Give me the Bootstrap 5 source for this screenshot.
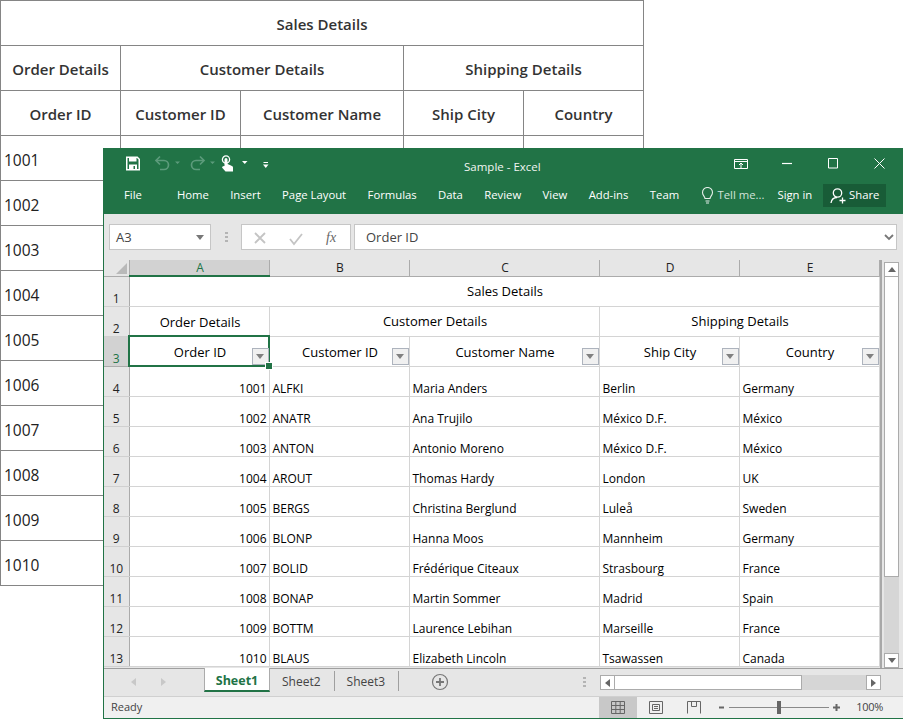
<!DOCTYPE html>
<html lang="en">
<head>
  <meta charset="UTF-8" />
  <title>Sales Details - Excel</title>
  <link href="https://cdn.jsdelivr.net/npm/bootstrap@5.3.0/dist/css/bootstrap.min.css" rel="stylesheet">
  <style>
    body { margin: 0; background: #fff; width: 903px; height: 719px; overflow: hidden; position: relative; font-family: "Open Sans", "Noto Sans", sans-serif; }

    /* table behind the window */
    .back-sheet { width: 644px; border-collapse: collapse; table-layout: fixed; margin: 0; color: #212121; }
    .back-sheet td, .back-sheet th { border: 1px solid #858585; height: 45px; padding: 2px 3px 0; font-size: 15px; vertical-align: middle; }
    .back-sheet th { text-align: center; font-weight: 600; color: #333; }
    .back-sheet td { font-size: 15.5px; padding-top: 5px; }

    /* excel window */
    .xl-window { position: absolute; left: 103px; top: 148px; width: 800px; height: 571px; border: 1px solid #217346; border-top: 0; border-right: 0; background: #e6e6e6; overflow: hidden; }
    .xl-title { height: 33px; background: #217346; color: #fff; position: relative; padding-left: 21px; }
    .xl-title-text { position: absolute; left: 360px; top: 10px; font-size: 11.5px; color: #f1f6f3; }
    .xl-tabs { height: 33px; background: #217346; color: #fff; font-size: 11.3px; padding-left: 20px; padding-bottom: 5px; }
    .xl-tabs span.tab { margin-right: 21.4px; }
    .xl-share { width: 63px; height: 23px; background: #185c37; margin-left: 11px; gap: 3px; }
    .xl-dim { color: #d3e3da; }

    .xl-formula { height: 46px; padding: 10px 6px 10px 5px; }
    .xl-box { background: #fff; border: 1px solid #c6c6c6; height: 26px; font-size: 13px; color: #444; padding-top: 1px; }
    .xl-name { width: 102px; padding-left: 6px; padding-right: 6px; }
    .xl-grip { width: 30px; }
    .xl-fx { width: 110px; }
    .xl-fx-label { font-family: "Liberation Serif", serif; font-style: italic; font-size: 14px; color: #666; margin-left: 4px; }
    .xl-input { flex: 1; margin-left: 3px; padding-left: 11px; padding-right: 11px; }

    .xl-body { height: 408px; position: relative; }
    .xl-grid-wrap { width: 776px; height: 408px; overflow: hidden; }
    .xl-grid { border-collapse: collapse; table-layout: fixed; width: 775px; margin: 0; font-size: 12px; color: #000; background: #fff; }
    .xl-grid td { border: 1px solid #d4d4d4; padding: 0 2px 0 3px; height: 30px; vertical-align: bottom; line-height: 15px; white-space: nowrap; overflow: hidden; position: relative; }
    .xl-grid th { background: #e6e6e6; font-weight: 400; text-align: center; height: 16px; padding: 0 0 0 2px; border: 0; border-right: 1px solid #ababab; border-bottom: 1px solid #ababab; color: #222; font-size: 12px; line-height: 15px; }
    .xl-grid th.is-on { background: #d2d2d2; color: #217346; border-bottom: 2px solid #217346; }
    .xl-grid th.rh { vertical-align: bottom; height: 30px; font-size: 12px; padding-left: 0; border-bottom-color: #d0d0d0; }
    .xl-grid th.rh.is-on { background: #d2d2d2; border-bottom: 1px solid #ababab; }
    .xl-grid td.num { text-align: right; }
    .xl-grid td.hd { text-align: center; vertical-align: middle; font-size: 13px; padding-left: 4px; }
    .xl-grid td.hd-low { padding-top: 2px; }
    .xl-grid td.hd3 { padding-top: 3px; overflow: visible; }
    .xl-grid td.sel { outline: 2px solid #217346; outline-offset: -1px; overflow: visible; z-index: 2; }
    .xl-corner { width: 0; height: 0; border-left: 11px solid transparent; border-bottom: 11px solid #b9b9b9; margin: 2px 2px 0 auto; }
    .xl-filter { position: absolute; right: 0; bottom: 1px; width: 17px; height: 17px; background: #f0f0f0; border: 1px solid #adb3bd; }
    .xl-filter::after { content: ""; position: absolute; left: 3px; top: 5px; border: 4px solid transparent; border-top: 5px solid #808080; border-bottom: 0; }
    .xl-handle { position: absolute; right: -4px; bottom: -4px; width: 6px; height: 6px; background: #217346; border: 1px solid #fff; box-sizing: content-box; z-index: 3; }

    .xl-vscroll { width: 23px; height: 408px; padding: 2px 4px 0 2px; border-left: 2px solid #a8a8a8; background: #e6e6e6; }
    .xl-sb-btn { height: 15px; background: #fff; border: 1px solid #ababab; flex-shrink: 0; }
    .xl-sb-thumb { height: 300px; background: #fff; border: 1px solid #ababab; border-top: 0; }
    .xl-sb-track { flex: 1; background: #d6d6d6; }
    .tri-up { border: 4px solid transparent; border-bottom: 5px solid #666; border-top: 0; }
    .tri-down { border: 4px solid transparent; border-top: 5px solid #666; border-bottom: 0; }
    .tri-left { border: 4px solid transparent; border-right: 5px solid #666; border-left: 0; }
    .tri-right { border: 4px solid transparent; border-left: 5px solid #666; border-right: 0; }

    .xl-sheets { height: 28px; border-top: 1px solid #9f9f9f; background: #e6e6e6; position: relative; font-size: 12px; color: #444; }
    .xl-nav { width: 100px; gap: 25px; padding-right: 12px; padding-top: 2px; }
    .xl-sheet-on { width: 66px; height: 24px; background: #fff; color: #217346; font-weight: 700; text-align: center; border: 1px solid #ababab; border-top: 0; border-bottom: 2px solid #217346; line-height: 25px; font-size: 12.5px; margin-top: -1px; }
    .xl-sheet { padding: 0 13px 0 12px; height: 20px; line-height: 21px; border-right: 1px solid #9f9f9f; margin-top: 2px; }
    .xl-add { margin-left: 32px; }
    .xl-dots { margin-left: 127px; width: 16px; }
    .xl-hscroll { width: 281px; height: 15px; margin-top: 6px; margin-right: 22px; background: #d6d6d6; }
    .xl-hs-btn { width: 15px; height: 15px; background: #fff; border: 1px solid #ababab; }
    .xl-hs-thumb { width: 187px; height: 15px; background: #fff; border: 1px solid #ababab; border-left: 0; }

    .xl-status { height: 22px; background: #f0f0f0; border-top: 1px solid #d0d0d0; font-size: 11px; color: #444; padding-left: 7px; }
    .xl-view { width: 38px; height: 21px; }
    .xl-view.is-on { background: #c8c8c8; }
    .xl-zoom-line { width: 100px; height: 1px; background: #8a8a8a; position: relative; }
    .xl-zoom-knob { position: absolute; left: 48px; top: -6px; width: 4px; height: 13px; background: #666; }
    .xl-zoom-pct { margin-left: 16px; letter-spacing: -.3px; }
  </style>
</head>
<body>
  <table class="back-sheet">
    <colgroup><col style="width:120px"><col style="width:120px"><col style="width:163px"><col style="width:120px"><col style="width:120px"></colgroup>
    <tr><th colspan="5">Sales Details</th></tr>
    <tr><th>Order Details</th><th colspan="2">Customer Details</th><th colspan="2">Shipping Details</th></tr>
    <tr><th>Order ID</th><th>Customer ID</th><th>Customer Name</th><th>Ship City</th><th>Country</th></tr>
    <tr><td>1001</td><td></td><td></td><td></td><td></td></tr>
    <tr><td>1002</td><td></td><td></td><td></td><td></td></tr>
    <tr><td>1003</td><td></td><td></td><td></td><td></td></tr>
    <tr><td>1004</td><td></td><td></td><td></td><td></td></tr>
    <tr><td>1005</td><td></td><td></td><td></td><td></td></tr>
    <tr><td>1006</td><td></td><td></td><td></td><td></td></tr>
    <tr><td>1007</td><td></td><td></td><td></td><td></td></tr>
    <tr><td>1008</td><td></td><td></td><td></td><td></td></tr>
    <tr><td>1009</td><td></td><td></td><td></td><td></td></tr>
    <tr><td>1010</td><td></td><td></td><td></td><td></td></tr>
  </table>

  <div class="xl-window d-flex flex-column">
    <div class="xl-title d-flex align-items-center">
      <svg width="150" height="20" viewBox="0 0 150 20" fill="none">
        <!-- save -->
        <path d="M1.750 2.250h10.500l2 2v10.500h-12.500z" stroke="#fff" stroke-width="1.500"/>
        <path d="M4 2h7.500v4.500h-7.500zM4 9.500h8v5h-8z" fill="#fff"/>
        <path d="M8.500 11h1.500v3h-1.500z" fill="#217346"/>
        <!-- undo, redo -->
        <g stroke="#5c9b7b" stroke-width="1.700">
          <path d="M31 5.500h8a4.500 4.500 0 0 1 0 9h-4"/><path d="M35 1.500l-4 4 4 4"/>
          <path d="M79 5.500h-8a4.500 4.500 0 0 0 0 9h4"/><path d="M75 1.500l4 4-4 4"/>
        </g>
        <path d="M50 6.500h5l-2.500 2.500zM85 6.500h5l-2.500 2.500z" fill="#5c9b7b"/>
        <!-- touch mode -->
        <circle cx="101" cy="4.500" r="3.600" stroke="#fff" stroke-width="1.300"/>
        <path d="M99.500 11V4.500a1.500 1.500 0 0 1 3 0v4.500l3.500 1.500c1 .5 2 1 2 2v4h-7.500l-3.500-4 .8-1.200z" fill="#fff"/>
        <path d="M117 6h5.500l-2.750 3z" fill="#fff"/>
        <!-- customize -->
        <path d="M138.500 7.500h4.500" stroke="#fff"/>
        <path d="M138 9.500h5.500l-2.750 3.500z" fill="#fff"/>
      </svg>
      <div class="xl-title-text">Sample - Excel</div>
      <div class="ms-auto d-flex align-items-center" style="padding-right:9px">
        <svg width="160" height="20" viewBox="0 0 160 20" fill="none" stroke="#fff" stroke-width="1">
          <path d="M.500 4.500h13v9h-13zM.500 6.500h13M7 13v-5M5 10l2-2 2 2"/>
          <path d="M48 8.500h10" stroke-width="1.200"/>
          <path d="M94.500 3.500h9v9.500h-9z"/>
          <path d="M140.500 3.500l10 10M150.500 3.500l-10 10"/>
        </svg>
      </div>
    </div>
    <div class="xl-tabs d-flex align-items-center">
      <span class="tab" style="margin-right:35px">File</span>
      <span class="tab">Home</span>
      <span class="tab">Insert</span>
      <span class="tab">Page Layout</span>
      <span class="tab">Formulas</span>
      <span class="tab">Data</span>
      <span class="tab">Review</span>
      <span class="tab">View</span>
      <span class="tab">Add-ins</span>
      <span class="tab">Team</span>
      <svg width="13" height="17" viewBox="0 0 13 17" fill="none" stroke="#e4eee9" stroke-width="1.100"><path d="M4 11.500c0-2-2.500-3-2.500-6a5 5 0 0 1 10 0c0 3-2.500 4-2.500 6zM4.500 14h4M5 16h3"/></svg>
      <span class="xl-dim ms-1" style="margin-right:13px">Tell me...</span>
      <span>Sign in</span>
      <div class="xl-share d-flex align-items-center justify-content-center">
        <svg width="16" height="17" viewBox="0 0 16 17" fill="none" stroke="#fff" stroke-width="1.300"><circle cx="7.500" cy="6" r="4.200"/><path d="M1 16c.5-3.500 3-5.500 6-5.500M9.500 13.500h6M12.500 10.500v6"/></svg>
        <span>Share</span>
      </div>
    </div>

    <div class="xl-formula d-flex">
      <div class="xl-box xl-name d-flex align-items-center justify-content-between"><span>A3</span><span class="tri-down" style="border-top-color:#777"></span></div>
      <div class="xl-grip d-flex align-items-center justify-content-center">
        <svg width="3" height="11" viewBox="0 0 3 11" fill="#b4b4b4"><path d="M0 0h3v2h-3zM0 4h3v2h-3zM0 8h3v2h-3z"/></svg>
      </div>
      <div class="xl-box xl-fx d-flex align-items-center">
        <svg width="80" height="24" viewBox="0 0 80 24" fill="none" stroke="#c4c4c4" stroke-width="1.800">
          <path d="M13 7l10 10M23 7l-10 10"/>
          <path d="M48 13l4 5 8-10"/>
        </svg>
        <span class="xl-fx-label">fx</span>
      </div>
      <div class="xl-box xl-input d-flex align-items-center justify-content-between"><span>Order ID</span><svg width="10" height="7" viewBox="0 0 10 7" fill="none" stroke="#777" stroke-width="1.800" style="margin-right:-9px"><path d="M1 1l4 4 4-4"/></svg></div>
    </div>

    <div class="xl-body d-flex">
      <div class="xl-grid-wrap">
        <table class="xl-grid">
          <colgroup><col style="width:25px"><col style="width:140px"><col style="width:140px"><col style="width:190px"><col style="width:140px"><col style="width:140px"></colgroup>
          <tr><th><div class="xl-corner"></div></th><th class="is-on">A</th><th>B</th><th>C</th><th>D</th><th>E</th></tr>
          <tr><th class="rh">1</th><td class="hd" colspan="5">Sales Details</td></tr>
          <tr><th class="rh">2</th><td class="hd hd-low">Order Details</td><td class="hd" colspan="2">Customer Details</td><td class="hd" colspan="2">Shipping Details</td></tr>
          <tr><th class="rh is-on">3</th><td class="hd hd3 sel">Order ID<span class="xl-filter"></span><span class="xl-handle"></span></td><td class="hd hd3">Customer ID<span class="xl-filter"></span></td><td class="hd hd3">Customer Name<span class="xl-filter"></span></td><td class="hd hd3">Ship City<span class="xl-filter"></span></td><td class="hd hd3">Country<span class="xl-filter"></span></td></tr>
          <tr><th class="rh">4</th><td class="num">1001</td><td>ALFKI</td><td>Maria Anders</td><td>Berlin</td><td>Germany</td></tr>
          <tr><th class="rh">5</th><td class="num">1002</td><td>ANATR</td><td>Ana Trujilo</td><td>México D.F.</td><td>México</td></tr>
          <tr><th class="rh">6</th><td class="num">1003</td><td>ANTON</td><td>Antonio Moreno</td><td>México D.F.</td><td>México</td></tr>
          <tr><th class="rh">7</th><td class="num">1004</td><td>AROUT</td><td>Thomas Hardy</td><td>London</td><td>UK</td></tr>
          <tr><th class="rh">8</th><td class="num">1005</td><td>BERGS</td><td>Christina Berglund</td><td>Luleå</td><td>Sweden</td></tr>
          <tr><th class="rh">9</th><td class="num">1006</td><td>BLONP</td><td>Hanna Moos</td><td>Mannheim</td><td>Germany</td></tr>
          <tr><th class="rh">10</th><td class="num">1007</td><td>BOLID</td><td>Frédérique Citeaux</td><td>Strasbourg</td><td>France</td></tr>
          <tr><th class="rh">11</th><td class="num">1008</td><td>BONAP</td><td>Martin Sommer</td><td>Madrid</td><td>Spain</td></tr>
          <tr><th class="rh">12</th><td class="num">1009</td><td>BOTTM</td><td>Laurence Lebihan</td><td>Marseille</td><td>France</td></tr>
          <tr><th class="rh">13</th><td class="num">1010</td><td>BLAUS</td><td>Elizabeth Lincoln</td><td>Tsawassen</td><td>Canada</td></tr>
        </table>
      </div>
      <div class="xl-vscroll d-flex flex-column">
        <div class="xl-sb-btn d-flex align-items-center justify-content-center"><span class="tri-up"></span></div>
        <div class="xl-sb-thumb"></div>
        <div class="xl-sb-track"></div>
        <div class="xl-sb-btn d-flex align-items-center justify-content-center"><span class="tri-down"></span></div>
      </div>
    </div>

    <div class="xl-sheets d-flex">
      <div class="xl-nav d-flex justify-content-center align-items-center" style="height:24px"><span class="tri-left" style="border-right-color:#c8c8c8"></span><span class="tri-right" style="border-left-color:#c8c8c8"></span></div>
      <div class="xl-sheet-on">Sheet1</div>
      <div class="xl-sheet">Sheet2</div>
      <div class="xl-sheet">Sheet3</div>
      <div class="xl-add d-flex align-items-center" style="height:26px">
        <svg width="18" height="18" viewBox="0 0 18 18" fill="none" stroke="#777"><circle cx="9" cy="9" r="7.500" stroke-width="1.200"/><path d="M9 5v8M5 9h8" stroke-width="1.800"/></svg>
      </div>
      <div class="xl-dots d-flex align-items-center justify-content-center" style="height:26px">
        <svg width="3" height="11" viewBox="0 0 3 11" fill="#b4b4b4"><path d="M0 0h3v2h-3zM0 4h3v2h-3zM0 8h3v2h-3z"/></svg>
      </div>
      <div class="xl-hscroll d-flex ms-auto">
        <div class="xl-hs-btn d-flex align-items-center justify-content-center"><span class="tri-left"></span></div>
        <div class="xl-hs-thumb"></div>
        <div class="xl-hs-btn d-flex align-items-center justify-content-center ms-auto"><span class="tri-right"></span></div>
      </div>
    </div>

    <div class="xl-status d-flex align-items-center">
      <span>Ready</span>
      <div class="d-flex align-items-center" style="margin-left:457px">
        <div class="xl-view is-on d-flex align-items-center justify-content-center">
          <svg width="14" height="13" viewBox="0 0 14 13" fill="none" stroke="#666"><path d="M.500.500h13v12h-13zM.500 4.500h13M.500 8.500h13M4.800.500v12M9.200.500v12"/></svg>
        </div>
        <div class="xl-view d-flex align-items-center justify-content-center">
          <svg width="14" height="13" viewBox="0 0 14 13" fill="none" stroke="#666"><path d="M.500.500h13v12h-13zM3.500 3.500h7v6h-7zM5 5.500h4M5 7.500h4"/></svg>
        </div>
        <div class="xl-view d-flex align-items-center justify-content-center">
          <svg width="14" height="13" viewBox="0 0 14 13" fill="none" stroke="#666"><path d="M.500 12.500v-12h13v12M4.500.500v5h5v-5"/></svg>
        </div>
      </div>
      <div class="d-flex align-items-center" style="margin-left:5px;gap:4px">
        <svg width="7" height="7" viewBox="0 0 7 7" fill="#666"><path d="M1 2.500h5v2h-5z"/></svg>
        <div class="xl-zoom-line"><div class="xl-zoom-knob"></div></div>
        <svg width="7" height="7" viewBox="0 0 7 7" fill="#666"><path d="M0 2.500h7v2h-7zM2.500 0h2v7h-2z"/></svg>
      </div>
      <span class="xl-zoom-pct">100%</span>
    </div>
  </div>
</body>
</html>
